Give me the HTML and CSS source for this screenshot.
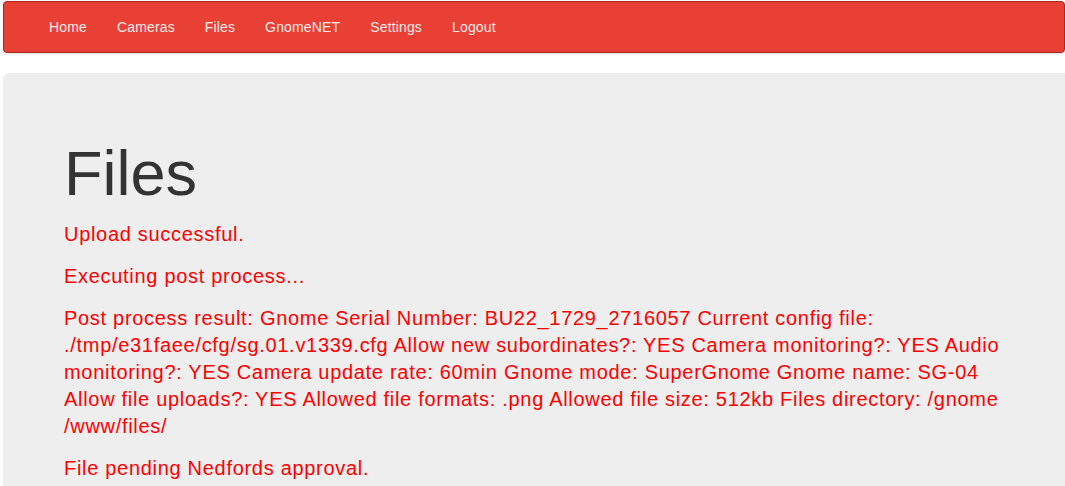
FILE: index.html
```html
<!DOCTYPE html>
<html>
<head>
<meta charset="utf-8">
<title>Files</title>
<link rel="stylesheet" href="styles.css">
</head>
<body>
<div class="page">
  <nav class="navbar">
    <ul class="nav">
      <li><a href="#">Home</a></li>
      <li><a href="#">Cameras</a></li>
      <li><a href="#">Files</a></li>
      <li><a href="#">GnomeNET</a></li>
      <li><a href="#">Settings</a></li>
      <li><a href="#">Logout</a></li>
    </ul>
  </nav>
  <div class="jumbotron">
    <h1>Files</h1>
    <p class="msg">Upload successful.</p>
    <p class="msg">Executing post process...</p>
    <p class="msg">Post process result: Gnome Serial Number: BU22_1729_2716057 Current config file: ./tmp/e31faee/cfg/sg.01.v1339.cfg Allow new subordinates?: YES Camera monitoring?: YES Audio monitoring?: YES Camera update rate: 60min Gnome mode: SuperGnome Gnome name: SG-04 Allow file uploads?: YES Allowed file formats: .png Allowed file size: 512kb Files directory: /gnome<wbr>/www/files/</p>
    <p class="msg">File pending Nedfords approval.</p>
  </div>
</div>
</body>
</html>
```
FILE: styles.css
```css
html, body {
  margin: 0;
  padding: 0;
  background: #fff;
  font-family: "Liberation Sans", Arial, sans-serif;
  overflow: hidden;
}
.page {
  padding: 1px 0 0 3px;
}
.navbar {
  height: 50px;
  background: #e84035;
  border: 1px solid #a8261c;
  border-radius: 4px;
  box-shadow: 0 1px 3px rgba(0,0,0,0.12);
  padding-left: 30px;
  margin-bottom: 20px;
}
.nav {
  list-style: none;
  margin: 0;
  padding: 0;
  display: flex;
}
.nav a {
  display: block;
  padding: 15px;
  line-height: 20px;
  font-size: 14px;
  letter-spacing: 0.15px;
  color: #fdeceb;
  text-decoration: none;
}
.jumbotron {
  background: #eee;
  border-radius: 6px;
  padding: 66px 45px 30px 61px;
  margin-right: -6px;
}
.jumbotron h1 {
  margin: 0 0 13px;
  font-size: 63px;
  line-height: 69px;
  font-weight: 500;
  color: #333;
}
.msg {
  margin: 0 0 15px;
  font-size: 20px;
  line-height: 27px;
  letter-spacing: 0.7px;
  color: #f00;
}
```
